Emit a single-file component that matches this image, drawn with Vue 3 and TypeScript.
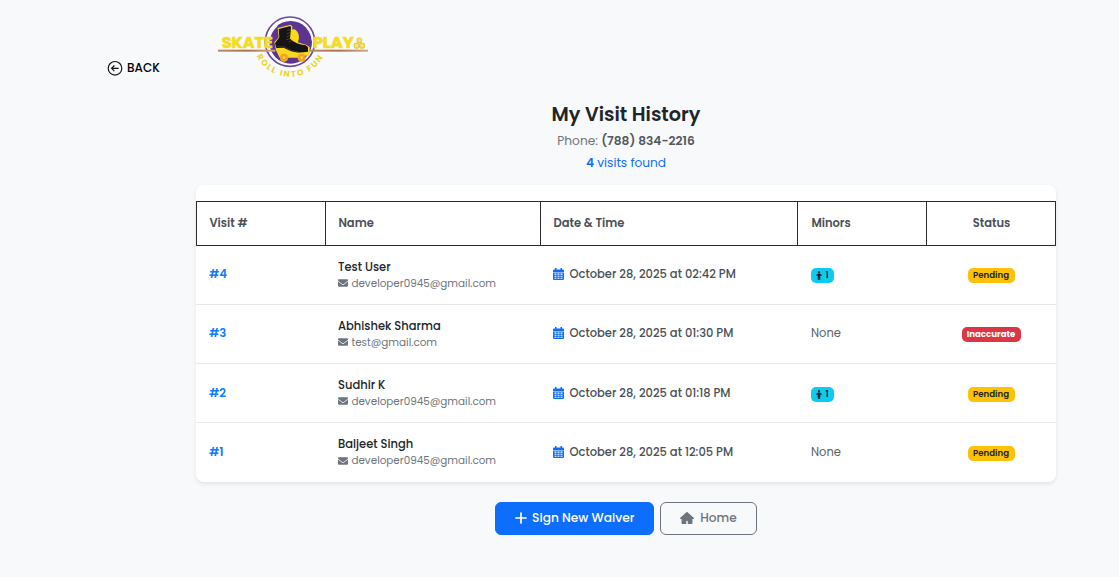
<script setup lang="ts">
type Status = 'Pending' | 'Inaccurate'

interface Visit {
  id: number
  name: string
  email: string
  date: string
  minors: number
  status: Status
}

const columns: string[] = ['Visit #', 'Name', 'Date & Time', 'Minors', 'Status']

const visits: Visit[] = [
  { id: 4, name: 'Test User', email: 'developer0945@gmail.com', date: 'October 28, 2025 at 02:42 PM', minors: 1, status: 'Pending' },
  { id: 3, name: 'Abhishek Sharma', email: 'test@gmail.com', date: 'October 28, 2025 at 01:30 PM', minors: 0, status: 'Inaccurate' },
  { id: 2, name: 'Sudhir K', email: 'developer0945@gmail.com', date: 'October 28, 2025 at 01:18 PM', minors: 1, status: 'Pending' },
  { id: 1, name: 'Baljeet Singh', email: 'developer0945@gmail.com', date: 'October 28, 2025 at 12:05 PM', minors: 0, status: 'Pending' },
]
</script>

<template>
  <div class="page">
    <header class="top">
      <a class="back">
        <svg class="back-icon" viewBox="0 0 16 16">
          <circle cx="8" cy="8.300" r="6.800" />
          <path d="M11.600 8.300H4.600M7.400 5.500L4.600 8.300l2.800 2.800" />
        </svg>
        <span>BACK</span>
      </a>
      <svg class="logo" viewBox="0 0 498 228">
        <defs>
          <linearGradient id="bar" x1="0" x2="1" y1="0" y2="0">
            <stop offset="0" stop-color="#b98a6a" />
            <stop offset="0.5" stop-color="#a9744f" />
            <stop offset="1" stop-color="#cfa78c" />
          </linearGradient>
          <path id="tagline" d="M140 144A112 112 0 0 0 341 144" />
        </defs>
        <circle cx="240" cy="101" r="74" fill="#fff" stroke="#6a4aa0" stroke-width="5" />
        <circle cx="242" cy="103" r="64" fill="#5b3591" />
        <path d="M184 134a66 66 0 0 0 30 30M192 148a66 66 0 0 0 10 10M290 59a66 66 0 0 1 17 38M179 92a64 64 0 0 1 22-38" fill="none" stroke="#f4f0fa" stroke-width="3.500" />
        <ellipse cx="250" cy="88" rx="17" ry="24" fill="#f8dc1c" />
        <rect x="24" y="125" width="172" height="6" fill="url(#bar)" />
        <rect x="300" y="125" width="174" height="6" fill="url(#bar)" />
        <path d="M203 60l38-10 6 5-2 35c14 12 28 17 43 20l11 7v26h-14l-6 6h-70l-11-22-5-24 13-15z" fill="#f8d81c" />
        <path d="M206 63l35-9 2 4-3 34c12 12 28 17 47 20l7 6v13c-26 4-44 3-59-5l-14-7-22 1-4-14 13-18z" fill="#151515" />
        <path d="M231 68l9-3M231 77l9-3M230 86l10-3M229 95l11-3M236 103l9-5" stroke="#55514a" stroke-width="2.200" />
        <path d="M201 116l20 0 24 12 24 5" fill="none" stroke="#4b4b4b" stroke-width="1.800" />
        <circle cx="222" cy="149" r="12" fill="#f5a51b" />
        <circle cx="222" cy="149" r="4" fill="#ffd65c" />
        <circle cx="275" cy="149" r="12" fill="#f5a51b" />
        <circle cx="275" cy="149" r="4" fill="#ffd65c" />
        <text class="brand" x="35" y="121" textLength="153" lengthAdjust="spacingAndGlyphs">SKATE</text>
        <text class="brand" x="308" y="121" textLength="123" lengthAdjust="spacingAndGlyphs">PLAY</text>
        <g fill="#eee29a" stroke="#e5cc35" stroke-width="3.500">
          <circle cx="448" cy="97" r="7" />
          <circle cx="440" cy="113" r="7.500" />
          <circle cx="456" cy="113" r="7.500" />
        </g>
        <text class="tag"><textPath href="#tagline" textLength="244">ROLL INTO FUN</textPath></text>
      </svg>
    </header>

    <main class="content">
      <h1 class="title"><span>My Visit History</span></h1>
      <p class="phone"><span>Phone: <strong>(788) 834-2216</strong></span></p>
      <p class="found"><span><strong>4</strong> visits found</span></p>

      <section class="card">
        <div class="row head">
          <div v-for="column in columns" :key="column" class="cell"><span>{{ column }}</span></div>
        </div>
        <div v-for="visit in visits" :key="visit.id" class="row visit">
          <div class="cell number"><span>#{{ visit.id }}</span></div>
          <div class="cell person">
            <div class="name"><span>{{ visit.name }}</span></div>
            <div class="email">
              <svg viewBox="0 0 512 512">
                <path d="M48 64C21.500 64 0 85.500 0 112c0 15.100 7.100 29.300 19.200 38.400L236.800 313.600c11.400 8.500 27 8.500 38.400 0L492.800 150.400c12.100-9.100 19.200-23.300 19.200-38.400 0-26.500-21.500-48-48-48zM0 176v208c0 35.300 28.700 64 64 64h384c35.300 0 64-28.700 64-64V176L294.400 339.200c-22.800 17.100-54 17.100-76.800 0z" />
              </svg>
              <span>{{ visit.email }}</span>
            </div>
          </div>
          <div class="cell date">
            <svg viewBox="0 0 11 12">
              <path fill-rule="evenodd" d="M2 0h1.500v1.500h4V0H9v1.500h1q1 0 1 1V4H0V2.500q0-1 1-1h1zM0 4.600h11V11q0 1-1 1H1q-1 0-1-1zM1.500 5.500v1.300h2V5.500zM4.500 5.500v1.300h2V5.500zM7.500 5.500v1.300h2V5.500zM1.500 7.700v1.100h2V7.700zM4.500 7.700v1.100h2V7.700zM7.500 7.700v1.100h2V7.700zM1.500 9.700v1h2v-1zM4.500 9.700v1h2v-1zM7.500 9.700v1h2v-1z" />
            </svg>
            <span>{{ visit.date }}</span>
          </div>
          <div class="cell minors">
            <span v-if="visit.minors" class="badge info">
              <svg viewBox="0 0 320 512">
                <circle cx="160" cy="64" r="64" />
                <path d="M104 144h112l90 72c34 28 4 76-32 58l-42-24v222c0 58-64 58-64 0v-88h-16v88c0 58-64 58-64 0V250l-42 24c-36 18-66-30-32-58z" />
              </svg>
              <span>{{ visit.minors }}</span>
            </span>
            <span v-else class="none">None</span>
          </div>
          <div class="cell status">
            <span class="badge" :class="visit.status.toLowerCase()">{{ visit.status }}</span>
          </div>
        </div>
      </section>

      <div class="actions">
        <button class="btn primary">
          <svg viewBox="0 0 12 12"><path d="M6 1v10M1 6h10" /></svg>
          <span>Sign New Waiver</span>
        </button>
        <button class="btn outline">
          <svg viewBox="0 0 576 512">
            <path d="M575.800 255.500c0 18-15 32.100-32 32.100h-32l.7 160.200c.2 35.500-28.500 64.300-64 64.300H352c-17.700 0-32-14.300-32-32v-88c0-17.700-14.300-32-32-32s-32 14.300-32 32v88c0 17.700-14.300 32-32 32h-96.500c-35.300 0-64-28.700-64-64V287.600H32c-18 0-32-14-32-32.100 0-9 3-17 10-24L266.400 8c7-7 15-8 22-8s15 2 21 7l255.400 224.500c8 7 12 15 11 24z" />
          </svg>
          <span>Home</span>
        </button>
      </div>
    </main>
  </div>
</template>

<style>
body {
  margin: 0;
  background: #f8f9fc;
}
</style>

<style scoped>
.page {
  box-sizing: border-box;
  width: 1119px;
  height: 577px;
  overflow: hidden;
  background: #f8f9fb;
  color: #212529;
  font-family: Poppins, Inter, "Open Sans", sans-serif;
}
.top {
  display: flex;
  height: 84px;
  padding-left: 107px;
}
.back {
  display: flex;
  align-items: center;
  width: 103px;
  height: 20px;
  margin-top: 58px;
  gap: 4px;
  color: #000;
  font-size: 12px;
  font-weight: 500;
}
.back-icon {
  width: 16px;
  height: 16px;
  fill: none;
  stroke: #111;
  stroke-width: 1.15;
}
.logo {
  width: 166px;
  height: 76px;
  margin-top: 8px;
}
.brand {
  fill: #f6dc20;
  stroke: #f6dc20;
  stroke-width: 2;
  font-size: 49px;
  font-weight: 700;
}
.tag {
  fill: #ecd42e;
  font-size: 25px;
  font-weight: 700;
}
.content {
  width: 860px;
  margin-left: 196px;
}
.title {
  height: 24px;
  margin: 19px 0 0;
  font-size: 19.2px;
  font-weight: 600;
  line-height: 24px;
  text-align: center;
}
.phone,
.found {
  margin: 0;
  font-size: 12.2px;
  line-height: 22px;
  text-align: center;
}
.phone {
  margin-top: 3px;
  color: #6c757d;
}
.phone strong {
  color: #53585e;
  font-weight: 600;
}
.found {
  color: #0d6efd;
}
.found strong {
  font-weight: 600;
}
.card {
  box-sizing: border-box;
  height: 297px;
  margin-top: 11px;
  padding-top: 16px;
  border-radius: 8px;
  background: #fff;
  box-shadow: 0 2px 4px rgba(0, 0, 0, 0.09);
}
.row {
  display: grid;
  grid-template-columns: 129px 215px 257px 129px 130px;
}
.cell {
  display: flex;
  align-items: center;
  box-sizing: border-box;
  padding-left: 13px;
}
.head {
  box-sizing: border-box;
  height: 45px;
  border: solid #2b2b2b;
  border-width: 1px 0;
  color: #495057;
  font-size: 11.5px;
  font-weight: 600;
}
.head .cell {
  padding-left: 12.4px;
  border-left: 1px solid #2b2b2b;
}
.head .cell:nth-child(4) {
  padding-left: 13.4px;
}
.head .cell:last-child {
  justify-content: center;
  padding: 0 0 0 1px;
  border-right: 1px solid #2b2b2b;
}
.visit {
  box-sizing: border-box;
  height: 59.150px;
  border-bottom: 1px solid #e6e8ea;
}
.visit:last-child {
  border-bottom: 0;
}
.number {
  padding-bottom: 0.6px;
  color: #0d7bff;
  font-size: 11.7px;
  font-weight: 600;
}
.person {
  flex-direction: column;
  align-items: flex-start;
  justify-content: center;
  padding-left: 13px;
}
.name {
  height: 16px;
  font-size: 11.5px;
  font-weight: 500;
  line-height: 16px;
}
.email {
  display: flex;
  align-items: center;
  height: 16px;
  padding-top: 1px;
  gap: 3.400px;
  color: #6c757d;
  font-size: 10.4px;
}
.email svg {
  width: 10px;
  height: 10px;
  margin-top: -1px;
  fill: #6c757d;
}
.date {
  padding-bottom: 0.6px;
  gap: 5.500px;
  color: #495057;
  font-size: 11.5px;
  font-weight: 500;
}
.date svg {
  width: 11px;
  height: 12px;
  margin-top: -1px;
  fill: #0d6efd;
}
.minors {
  padding-left: 14px;
}
.none {
  padding-bottom: 0.9px;
  color: #5b6167;
  font-size: 11.5px;
}
.status {
  justify-content: center;
  padding: 0;
}
.badge {
  display: inline-flex;
  align-items: center;
  justify-content: center;
  box-sizing: border-box;
  height: 15px;
  margin-top: 1.4px;
  border-radius: 5px;
  font-size: 8.600px;
  font-weight: 600;
}
.info {
  width: 23px;
  gap: 3px;
  background: #0dcaf0;
  color: #212529;
}
.info svg {
  width: 6px;
  height: 9px;
  fill: #212529;
}
.pending {
  width: 47px;
  background: #ffc107;
  color: #212529;
}
.inaccurate {
  width: 59px;
  background: #dc3545;
  color: #fff;
  font-weight: 700;
}
.actions {
  display: flex;
  justify-content: center;
  margin-top: 20px;
  gap: 6px;
}
.btn {
  display: flex;
  align-items: center;
  justify-content: center;
  box-sizing: border-box;
  height: 33px;
  padding: 0 0 1px;
  border: 1px solid #6c757d;
  border-radius: 6px;
  background: transparent;
  color: #6c757d;
  font-family: inherit;
  font-size: 12.2px;
  font-weight: 500;
}
.primary {
  width: 159px;
  border-color: #0d6efd;
  background: #0d6efd;
  color: #fff;
  gap: 5.500px;
}
.primary svg {
  width: 12px;
  height: 12px;
  fill: none;
  stroke: #fff;
  stroke-width: 1.7;
  stroke-linecap: round;
}
.outline {
  width: 97px;
  gap: 6px;
}
.outline svg {
  width: 14px;
  height: 12.5px;
  fill: #6c757d;
}
</style>
